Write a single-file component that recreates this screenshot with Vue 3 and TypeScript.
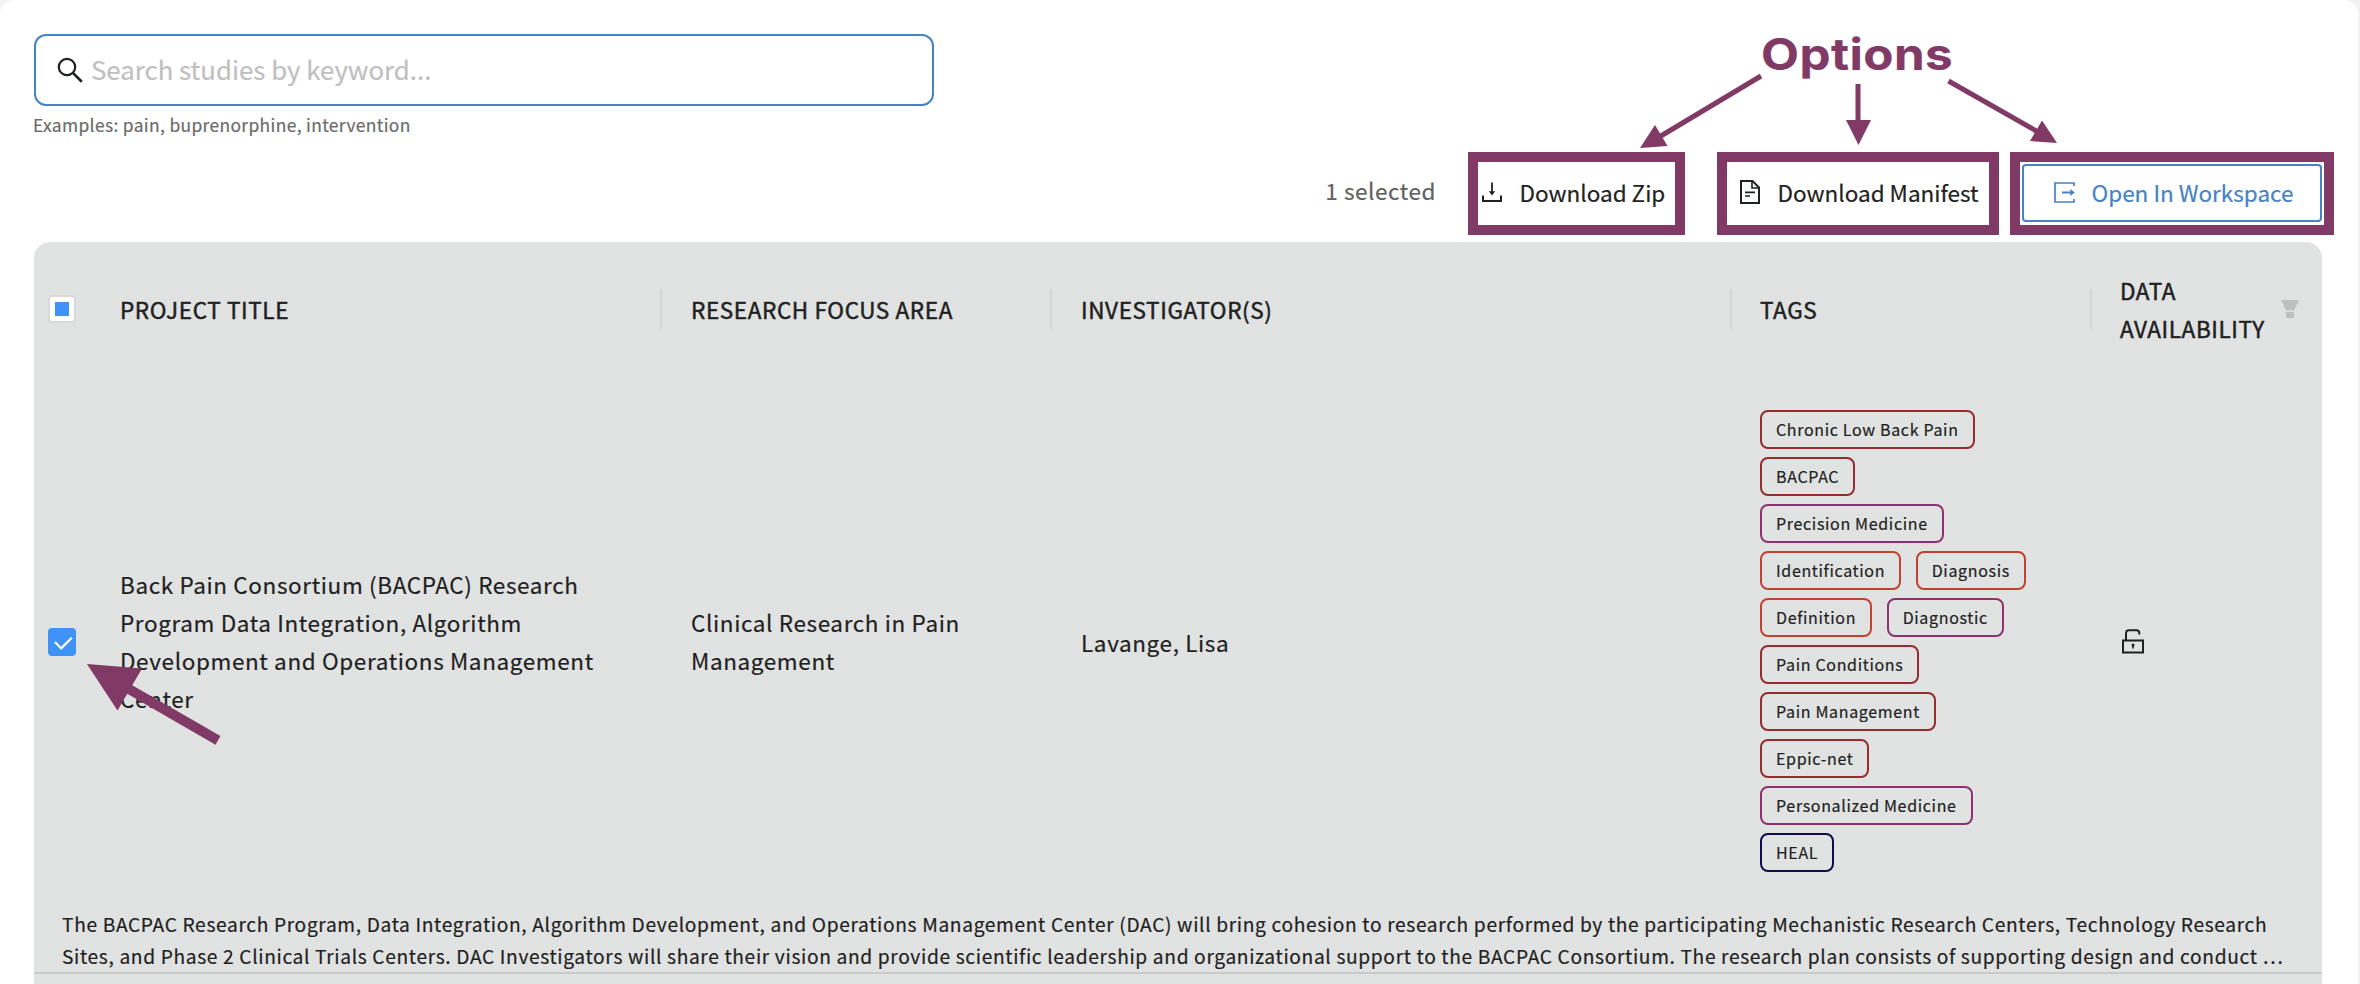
<script setup lang="ts">
import { ref } from 'vue'

interface Tag {
  label: string
  tone: 'red' | 'plum' | 'orange' | 'navy'
}

const keyword = ref('')

const titleLines = [
  'Back Pain Consortium (BACPAC) Research',
  'Program Data Integration, Algorithm',
  'Development and Operations Management',
  'Center',
]

const areaLines = ['Clinical Research in Pain', 'Management']

const tagRows: Tag[][] = [
  [{ label: 'Chronic Low Back Pain', tone: 'red' }],
  [{ label: 'BACPAC', tone: 'red' }],
  [{ label: 'Precision Medicine', tone: 'plum' }],
  [
    { label: 'Identification', tone: 'orange' },
    { label: 'Diagnosis', tone: 'orange' },
  ],
  [
    { label: 'Definition', tone: 'orange' },
    { label: 'Diagnostic', tone: 'plum' },
  ],
  [{ label: 'Pain Conditions', tone: 'red' }],
  [{ label: 'Pain Management', tone: 'red' }],
  [{ label: 'Eppic-net', tone: 'red' }],
  [{ label: 'Personalized Medicine', tone: 'plum' }],
  [{ label: 'HEAL', tone: 'navy' }],
]

const summaryLines = [
  'The BACPAC Research Program, Data Integration, Algorithm Development, and Operations Management Center (DAC) will bring cohesion to research performed by the participating Mechanistic Research Centers, Technology Research',
  'Sites, and Phase 2 Clinical Trials Centers. DAC Investigators will share their vision and provide scientific leadership and organizational support to the BACPAC Consortium. The research plan consists of supporting design and conduct …',
]
</script>

<template>
  <main class="page">
    <section class="search">
      <label class="search-box">
        <svg class="search-icon" viewBox="0 0 26 26" fill="none" stroke="#1f2222">
          <circle cx="10" cy="10" r="8.2" stroke-width="2.2" />
          <path d="M15.9 15.9 L24.8 24.8" stroke-width="2.7" />
        </svg>
        <input v-model="keyword" class="search-input" type="text" placeholder="Search studies by keyword..." />
      </label>
      <p class="hint">Examples: pain, buprenorphine, intervention</p>
    </section>

    <section class="toolbar">
      <span class="selected">1 selected</span>
      <div class="frame frame-zip">
        <button class="action" type="button">
          <svg class="icon-20" viewBox="0 0 20 20" fill="none" stroke="#1f2222" stroke-width="2">
            <path d="M1 13.5 V19 H19 V13.5" />
            <path d="M10 0.5 V12" stroke-width="1.8" />
            <path d="M6.8 9.3 H13.2 L10 13.6 Z" fill="#1f2222" stroke="none" />
          </svg>
          <span>Download Zip</span>
        </button>
      </div>
      <div class="frame frame-manifest">
        <button class="action" type="button">
          <svg class="icon-doc" viewBox="0 0 20 24" fill="none" stroke="#1f2222" stroke-width="2">
            <path d="M1 1 H12.5 L19 7.5 V23 H1 Z" />
            <path d="M12 1 V8 H19" stroke-width="1.6" />
            <path d="M5 12.3 H15 M5 16 H10" stroke-width="1.7" />
          </svg>
          <span>Download Manifest</span>
        </button>
      </div>
      <div class="frame frame-workspace">
        <button class="action action-outline" type="button">
          <svg class="icon-20" viewBox="0 0 21 21" fill="none" stroke="#4583c4" stroke-width="1.7">
            <path d="M20 4 V1 H1 V20 H20 V17" />
            <path d="M8 10.5 H18" stroke-width="2" />
            <path d="M16.3 7 V14 L20.8 10.5 Z" fill="#4583c4" stroke="none" />
          </svg>
          <span>Open In Workspace</span>
        </button>
      </div>
    </section>

    <section class="table">
      <div class="row head">
        <div class="cell-check"><span class="check partial"><i class="square"></i></span></div>
        <div class="cell inset split">PROJECT TITLE</div>
        <div class="cell inset split">RESEARCH FOCUS AREA</div>
        <div class="cell inset split">INVESTIGATOR(S)</div>
        <div class="cell split">TAGS</div>
        <div class="cell last">
          <span>DATA<br />AVAILABILITY</span>
          <svg class="filter" viewBox="0 0 18 18" fill="#bfc0c0">
            <path d="M0 0 H18 L13 10.6 H5 Z M5 12 H13 V18 H5 Z" />
          </svg>
        </div>
      </div>

      <div class="row body">
        <div class="cell-check">
          <span class="check checked">
            <svg class="tick" viewBox="0 0 28 28" fill="none" stroke="#fff" stroke-width="2.2">
              <path d="M7 14 L13.2 20.4 L23.8 9.8" />
            </svg>
          </span>
        </div>
        <div class="cell inset lifted"><div><div v-for="line in titleLines" :key="line">{{ line }}</div></div></div>
        <div class="cell inset lifted"><div><div v-for="line in areaLines" :key="line">{{ line }}</div></div></div>
        <div class="cell inset">Lavange, Lisa</div>
        <div class="cell lifted">
          <div class="tags">
            <div v-for="(tags, i) in tagRows" :key="i" class="tag-row">
              <span v-for="tag in tags" :key="tag.label" class="tag" :class="tag.tone">{{ tag.label }}</span>
            </div>
          </div>
        </div>
        <div class="cell lifted">
          <svg class="lock" viewBox="0 0 22 25" fill="none" stroke="#1f2222" stroke-width="2">
            <rect x="1" y="11.5" width="20" height="12" />
            <path d="M4 11.5 V4 Q4 1.2 6.8 1.2 H14.5 Q17.3 1.2 17.3 4 V5.6" />
            <path d="M11 15 V19.5" stroke-width="1.6" />
            <circle cx="11" cy="16" r="1.5" fill="#1f2222" stroke="none" />
          </svg>
        </div>
      </div>

      <div class="summary">
        <div v-for="line in summaryLines" :key="line">{{ line }}</div>
      </div>
    </section>

    <div class="callout">Options</div>
    <svg class="arrows" viewBox="0 0 2360 984" fill="#803a65" stroke="#803a65">
      <path d="M1761 76 L1660 136.5" stroke-width="5" />
      <path d="M1640 148 L1655 125 L1667.5 146 Z" stroke="none" />
      <path d="M1858 84 V122" stroke-width="5" />
      <path d="M1846 120 H1871 L1858.5 145 Z" stroke="none" />
      <path d="M1948.5 81 L2038 132" stroke-width="5" />
      <path d="M2057 143 L2042 120.5 L2030 141 Z" stroke="none" />
      <path d="M218 740.3 L128 688.5" stroke-width="10" />
      <path d="M87 664 L142 668.5 L117.5 710.5 Z" stroke="none" />
    </svg>
  </main>
</template>

<style>
html,
body {
  margin: 0;
  background: #f2f2f2;
  overflow: hidden;
}
</style>

<style scoped>
.page {
  position: relative;
  box-sizing: border-box;
  width: 2358px;
  height: 984px;
  overflow: hidden;
  padding: 34px 24px 0 34px;
  border-radius: 14px 14px 0 0;
  background: #fff;
  color: #1f2222;
  font-family: "Noto Sans CJK SC", "Noto Sans", sans-serif;
  font-size: 22.5px;
  line-height: 38px;
  -webkit-text-stroke: 0.2px currentColor;
}

.search {
  width: 900px;
  height: 118px;
}

.search-box {
  display: flex;
  align-items: center;
  box-sizing: border-box;
  height: 72px;
  padding-left: 21px;
  border: 2px solid #4583c4;
  border-radius: 12px;
  background: #fff;
}

.search-icon {
  width: 26px;
  height: 26px;
}

.search-input {
  flex: 1;
  height: 40px;
  margin: 0 20px 4px 8px;
  padding: 0;
  border: 0;
  outline: 0;
  background: transparent;
  font-family: inherit;
  font-size: 25.8px;
}

.search-input::placeholder {
  color: #bfbfbf;
  opacity: 1;
}

.hint {
  margin: 4px 0 0 -1px;
  color: #6a6b6b;
  font-size: 17.4px;
  line-height: 30px;
  letter-spacing: 0.36px;
}

.toolbar {
  display: flex;
  justify-content: flex-end;
  height: 83px;
}

.selected {
  margin: 19px 32px 0 0;
  color: #606161;
  letter-spacing: 0.55px;
}

.frame {
  box-sizing: border-box;
  height: 83px;
  border: 10px solid #803a65;
}

.frame-zip {
  width: 217px;
  margin-right: 32px;
  padding-left: 4px;
}

.frame-manifest {
  width: 282px;
  margin-right: 11px;
  padding-left: 13px;
}

.frame-workspace {
  width: 324px;
  padding: 2px;
}

.action {
  display: flex;
  align-items: center;
  box-sizing: border-box;
  height: 60px;
  padding: 0;
  border: 0;
  background: transparent;
  color: #1f2222;
  font-family: inherit;
  font-size: 22.5px;
  line-height: 38px;
  white-space: nowrap;
}

.action span {
  margin-left: 17.5px;
}

.action-outline {
  width: 300px;
  height: 58px;
  padding: 0 0 2px 30px;
  border: 2px solid #4583c4;
  border-radius: 4px;
  color: #4583c4;
}

.icon-20 {
  width: 20px;
  height: 20px;
}

.action-outline .icon-20 {
  width: 21px;
  height: 21px;
}

.action-outline span {
  margin-left: 16.5px;
}

.icon-doc {
  width: 20px;
  height: 24px;
}

.table {
  width: 2288px;
  height: 760px;
  margin-top: 7px;
  border-radius: 16px 16px 0 0;
  background: #e1e3e2;
  letter-spacing: 0.62px;
}

.row {
  display: grid;
  grid-template-columns: 57px 571px 390px 680px 360px 230px;
  align-items: center;
}

.head {
  height: 134px;
  -webkit-text-stroke: 0.5px #1f2222;
}

.body {
  height: 532px;
}

.cell-check {
  display: flex;
  padding-left: 14px;
}

.cell {
  display: flex;
  align-items: center;
  padding-left: 28px;
  white-space: nowrap;
}

.inset {
  padding-left: 29px;
}

.lifted {
  padding-bottom: 2px;
}

.split {
  height: 40px;
  border-right: 2px solid #d5d7d6;
}

.last {
  gap: 16px;
}

.filter {
  width: 18px;
  height: 18px;
}

.check {
  display: flex;
  align-items: center;
  justify-content: center;
  box-sizing: border-box;
  width: 28px;
  height: 28px;
  border-radius: 4px;
}

.partial {
  border: 2px solid #d9d9d9;
  background: #fff;
}

.square {
  width: 14px;
  height: 14px;
  background: #3f92f8;
}

.checked {
  background: #3f92f8;
}

.tick {
  width: 28px;
  height: 28px;
}

.tags {
  display: flex;
  flex-direction: column;
  gap: 7.9px;
}

.tag-row {
  display: flex;
  gap: 14.5px;
}

.tag {
  box-sizing: border-box;
  height: 39px;
  padding: 0 14px;
  border: 2px solid;
  border-radius: 8px;
  font-size: 16px;
  line-height: 35px;
  letter-spacing: 0.66px;
}

.red {
  border-color: #962c2e;
}

.plum {
  border-color: #8f3170;
}

.orange {
  border-color: #c1422e;
}

.navy {
  border-color: #110a4c;
}

.lock {
  width: 22px;
  height: 25px;
  margin-left: 2px;
}

.summary {
  height: 64px;
  padding-left: 28px;
  border-bottom: 2px solid #c8cbca;
  font-size: 19.2px;
  line-height: 32px;
  letter-spacing: 0.642px;
  white-space: nowrap;
}

.callout {
  position: absolute;
  top: 27px;
  left: 1761px;
  color: #803a65;
  font-family: Inter, "Open Sans", sans-serif;
  font-size: 44px;
  font-weight: 700;
  line-height: 54px;
  letter-spacing: 0.4px;
  transform: scaleX(1.12);
  transform-origin: left center;
}

.arrows {
  position: absolute;
  top: 0;
  left: 0;
  width: 2360px;
  height: 984px;
  pointer-events: none;
}
</style>
